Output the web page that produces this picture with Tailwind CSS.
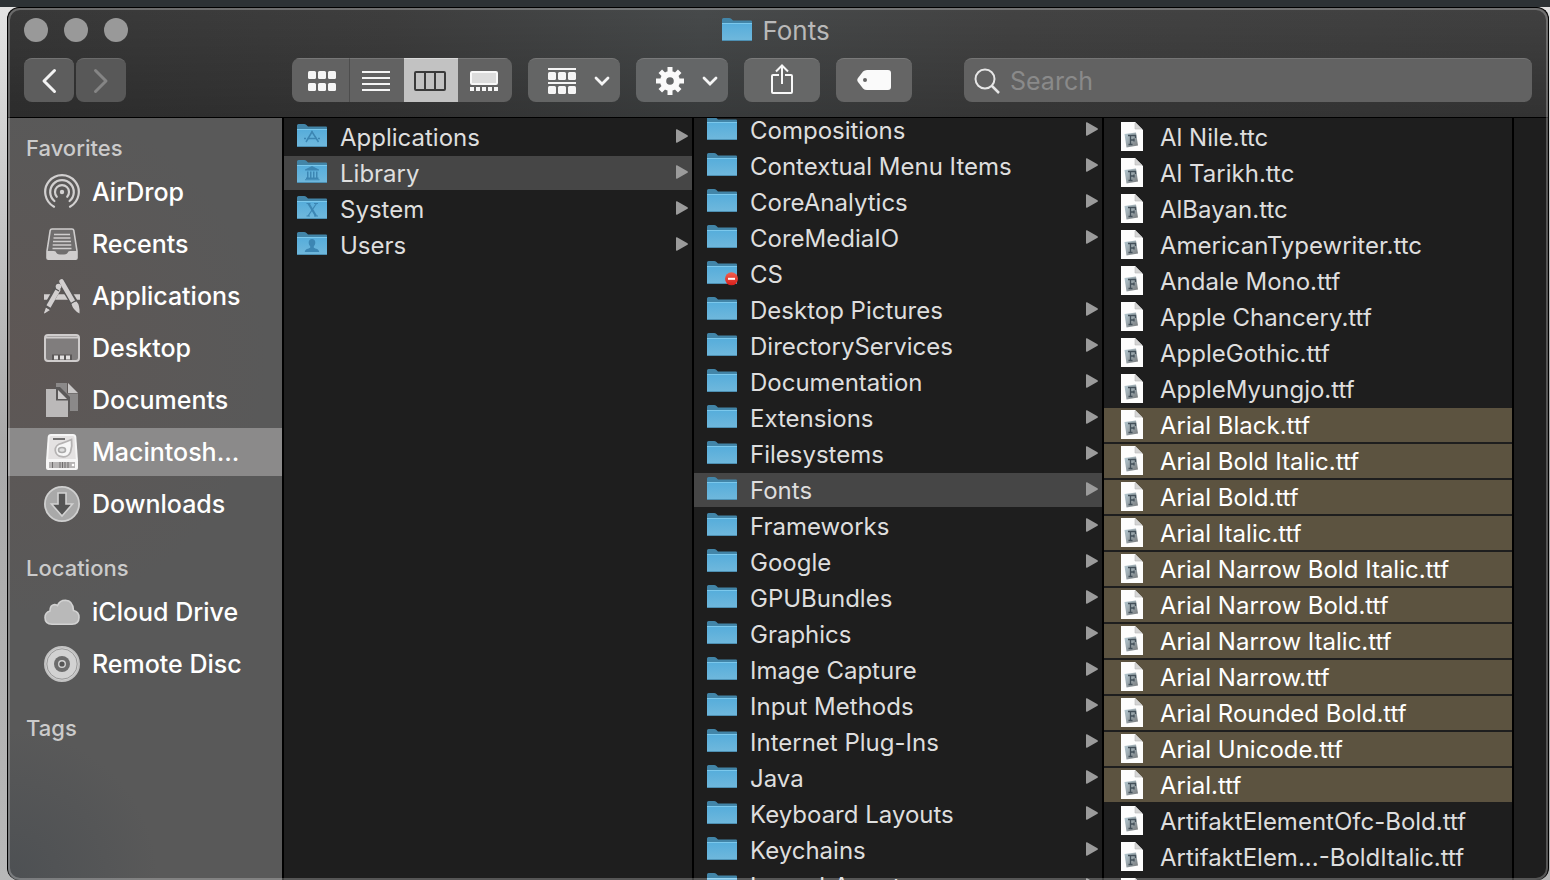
<!DOCTYPE html>
<html lang="en">
<head>
  <meta charset="UTF-8" />
  <meta name="viewport" content="width=device-width, initial-scale=1.0"/>
  <title>Fonts</title>
  <script src="https://cdn.jsdelivr.net/npm/@tailwindcss/browser@4"></script>
</head>
<body class="h-screen overflow-hidden flex flex-col bg-linear-to-b from-[#e4e4e4] via-[#a9a9a9] to-[#b8b8b8] font-[Inter,sans-serif] text-[24px] text-[#dedede]">

  <!-- Shared icons -->
  <svg class="absolute size-0" aria-hidden="true">
    <defs>
      <linearGradient id="folderFill" x1="0" y1="0" x2="0" y2="1">
        <stop offset="0" stop-color="#56addb"/>
        <stop offset="1" stop-color="#70b8dc"/>
      </linearGradient>
      <linearGradient id="fontFill" x1="0" y1="0" x2="1" y2="1">
        <stop offset="0" stop-color="#b8cdd6"/>
        <stop offset="1" stop-color="#77797b"/>
      </linearGradient>
      <linearGradient id="badgeFill" x1="0" y1="0" x2="0" y2="1">
        <stop offset="0" stop-color="#f2604e"/>
        <stop offset="1" stop-color="#d81f1c"/>
      </linearGradient>
      <symbol id="folder" viewBox="0 0 32 26">
        <path d="M0 2.500Q0 1 1.500 1H7Q8.500 1 9.500 2L11 3.500H29Q30 3.500 30 4.500V10H0Z" fill="#4285a8"/>
        <path d="M0 6.500H30V23Q30 24 29 24H1Q0 24 0 23Z" fill="url(#folderFill)"/>
        <path d="M0 6.500H30" stroke="#7bc8ec"/>
        <path d="M0 23.500H30" stroke="#4d8fb2"/>
      </symbol>
      <symbol id="folder-apps" viewBox="0 0 32 26">
        <use href="#folder" width="32" height="26"/>
        <g stroke="#3c86b3" fill="none" stroke-width="1.500"><path d="M15.500 8 9 19M14.500 8 21.500 19"/><path d="M7 15.500H23" stroke-dasharray="2 1.500 9 1.500"/></g>
      </symbol>
      <symbol id="folder-library" viewBox="0 0 32 26">
        <use href="#folder" width="32" height="26"/>
        <g fill="#3c86b3"><path d="M15 7 22 10.500V11.500H8V10.500Z"/><path d="M10 12.500h1.500v6H10zM13 12.500h1.500v6H13zM16 12.500h1.500v6H16zM19 12.500h1.500v6H19zM9 18.500h12.500V20H9zM8 20.300h14.500v1H8z"/></g>
      </symbol>
      <symbol id="folder-system" viewBox="0 0 32 26">
        <use href="#folder" width="32" height="26"/>
        <g stroke="#3c86b3" fill="none"><path d="M11.500 8.500 19 21" stroke-width="2.200"/><path d="M19.500 8.500 11 21" stroke-width="1.200"/><path d="M9.500 8.500h4M17 8.500h4M9.500 21h3.500M17 21h4"/></g>
      </symbol>
      <symbol id="folder-users" viewBox="0 0 32 26">
        <use href="#folder" width="32" height="26"/>
        <path d="M15 8c2 0 3.300 1.300 3.300 3.500 0 1.800-.7 3-1.500 3.800v1.500c1.700 1 5.200 1.200 5.400 4.200H7.800c.2-3 3.700-3.200 5.400-4.200v-1.500c-.8-.8-1.500-2-1.500-3.800C11.700 9.300 13 8 15 8Z" fill="#3c86b3"/>
      </symbol>
      <symbol id="folder-denied" viewBox="0 0 32 26">
        <use href="#folder" width="32" height="26"/>
        <circle cx="24.500" cy="18.800" r="6.500" fill="url(#badgeFill)"/>
        <rect x="21" y="17.800" width="7" height="2" fill="#fff"/>
      </symbol>
      <symbol id="font-file" viewBox="0 0 22 29">
        <path d="M0 0H14L22 8V29H0Z" fill="#fdfdfd"/>
        <path d="M14 0V7H21Z" fill="#d4d4d4"/>
        <path d="M14 1V7H21" fill="none" stroke="#bbb" stroke-width=".6"/>
        <path d="M3.500 12 15 10.500 17 23.500 5.500 25.500Z" fill="url(#fontFill)"/>
        <path d="M7 13.500H14.500V16M9.500 13.500V22.500M7.500 22.500H11.500M9.500 18H13M13 16.500V19.500" fill="none" stroke="#43505a" stroke-width="1.300"/>
      </symbol>
      <symbol id="arrow" viewBox="0 0 12 14">
        <path d="M0 1Q0 0 1 .3L11.500 6.200Q12.300 7 11.500 7.800L1 13.700Q0 14 0 13Z" fill="#9b9b9b"/>
      </symbol>

      <symbol id="airdrop" viewBox="0 0 36 36">
        <g fill="none" stroke="#d2d0d0" stroke-width="2.200" stroke-linecap="round">
          <path d="M10 32.700A16.800 16.800 0 1 1 26 32.700"/>
          <path d="M10.400 27A11.800 11.800 0 1 1 25.600 27"/>
          <path d="M12.800 22.800A7 7 0 1 1 23.200 22.800"/>
        </g>
        <circle cx="18" cy="18" r="2.200" fill="#d2d0d0"/>
      </symbol>
      <symbol id="recents" viewBox="0 0 36 36">
        <path d="M8 3H28Q29.500 3 29.800 4.500L33 25V32Q33 33.300 31.700 33.300H4.300Q3 33.300 3 32V25L6.200 4.500Q6.500 3 8 3Z" fill="#706e6e" stroke="#cfcdcd" stroke-width="1.600"/>
        <path d="M3 25H10Q12 25 12.500 27 13.500 28.500 18 28.500T23.500 27Q24 25 26 25H33V32Q33 33.300 31.700 33.300H4.300Q3 33.300 3 32Z" fill="#cfcdcd"/>
        <path d="M10 8.500H26M9.500 12H26.500M9 15.500H27M8.700 19H27.300M8.500 22.500H27.500" stroke="#cfcdcd" stroke-width="1.600"/>
      </symbol>
      <symbol id="apps" viewBox="0 0 36 36">
        <g fill="none" stroke="#d2cfcf">
          <path d="M0 19H36" stroke-width="5.500"/>
          <path d="M17 3 31 26" stroke="#585656" stroke-width="8"/>
          <path d="M16 6 3 29" stroke="#585656" stroke-width="7"/>
          <path d="M14.800 10.500 4.500 28.500" stroke-width="4.600"/>
          <path d="M17.500 3.500 29.300 24" stroke-width="4.600" stroke-linecap="round"/>
        </g>
        <circle cx="14.500" cy="8.500" r="2.800" fill="#d2cfcf"/>
        <path d="M2 29.500 6 32 .5 35.500 0 35ZM27.500 26 32.500 23.500Q36 27 35.500 35.500 29 32 27.500 26Z" fill="#d2cfcf"/>
        <path d="M10 10 15 13M1.500 28.500 6.500 31.500M26 26 32 22.500" stroke="#585656" stroke-width="1.200"/>
      </symbol>
      <symbol id="desktop" viewBox="0 0 36 36">
        <rect x="1" y="5" width="34" height="26" rx="3" fill="#807d7d" stroke="#cfcccc" stroke-width="2"/>
        <path d="M2 7.500H34" stroke="#cfcccc" stroke-width="2"/>
        <path d="M8 24.500H28V30H8Z" fill="#5a5757"/>
        <path d="M10 25.500h4v4h-4zM16 25.500h4v4h-4zM22 25.500h4v4h-4z" fill="#e2e0e0"/>
      </symbol>
      <symbol id="documents" viewBox="0 0 36 36">
        <path d="M12 1H23V11.500H34V29H12Z" fill="#8b8989"/>
        <path d="M24 1 34 11H24Z" fill="#c9c7c7"/>
        <path d="M11 5H16L26 15V30H11Z" fill="#5b5959"/>
        <path d="M2 7H12V18.500H24V35H2Z" fill="#bbb9b9"/>
        <path d="M14 8 23 17H14Z" fill="#cfcdcd"/>
      </symbol>
      <symbol id="drive" viewBox="0 0 36 36">
        <path d="M7 0H29Q32 0 32.300 3L34 27V34Q34 36 32 36H4Q2 36 2 34V27L3.700 3Q4 0 7 0Z" fill="#f6f6f6"/>
        <path d="M7 2H29Q30.300 2 30.500 4L31.800 25H4.200L5.500 4Q5.700 2 7 2Z" fill="#e4e2e2"/>
        <path d="M9 5H21" stroke="#555" stroke-width="1.600"/>
        <path d="M27.500 5.500Q22 8 17.500 9.300A7.800 6.800 0 1 0 26.500 18Q28.500 12 27.500 5.500Z" fill="#f6f6f6" stroke="#b5b3b3" stroke-width="1.800"/>
        <ellipse cx="18" cy="16" rx="3.500" ry="2.500" fill="#ddd" stroke="#aaa" stroke-width="1.600"/>
        <path d="M5 28H31V34H5Z" fill="#b6b4b4"/>
        <path d="M8.500 28V34M16 28V34M18.500 28V34M21 28V34M24 28V34" stroke="#706e6e"/>
        <circle cx="29" cy="31" r="1.300" fill="#fff"/>
      </symbol>
      <symbol id="downloads" viewBox="0 0 36 36">
        <circle cx="18" cy="18" r="17.100" fill="#a9a9a9" stroke="#cfcfcf" stroke-width="1.800"/>
        <path d="M14 7H22V18H28.500L18 30 7.500 18H14Z" fill="#555" stroke="#d2d2d2" stroke-width="1.600"/>
      </symbol>
      <symbol id="cloud" viewBox="0 0 36 36">
        <path d="M8 30.300Q1 30 1 23.500 1 18.500 6 17 6 11 10.500 10.500 12 10.500 13.500 11.500 15.500 6.200 21.500 6.200 29 6.500 29.500 16.500 35 17.500 35 23.500 35 30 28 30.300Z" fill="#b9b9b9" stroke="#d2d2d2" stroke-width="1.600"/>
      </symbol>
      <symbol id="disc" viewBox="0 0 36 36">
        <circle cx="18" cy="18" r="17.100" fill="#d2d2d2" stroke="#c2c2c2" stroke-width="1.800"/>
        <circle cx="18" cy="18" r="15.200" fill="none" stroke="#999"/>
        <circle cx="18" cy="18" r="8" fill="#6c6c6c"/>
        <circle cx="18" cy="18" r="3.300" fill="#555" stroke="#d2d2d2" stroke-width="1.400"/>
      </symbol>
    </defs>
  </svg>

  <!-- Strip above the window -->
  <div class="h-[7px] shrink-0 bg-[#2d3235]"></div>

  <!-- Window -->
  <div class="relative flex-1 min-h-0 ml-[7px] mr-px flex flex-col rounded-xl border-x border-t border-black bg-[#1e1e1e] overflow-hidden">

    <!-- Title bar and toolbar -->
    <header class="shrink-0 border-b border-black bg-[linear-gradient(to_bottom,transparent,rgba(0,0,0,0.22)),linear-gradient(to_right,#383838,#3e3e3e_25%,#474a4b_45%,#434343_65%,#404040)]">
      <div class="h-11 pl-4 pr-5 grid grid-cols-[1fr_auto_1fr] items-center">
        <div class="flex gap-4">
          <button aria-label="Close" class="size-6 rounded-full bg-[#999]"></button>
          <button aria-label="Minimize" class="size-6 rounded-full bg-[#999]"></button>
          <button aria-label="Zoom" class="size-6 rounded-full bg-[#999]"></button>
        </div>
        <h1 class="flex items-center gap-2 text-[26px] leading-8 text-[#b9b9b9]">
          <svg class="w-8 h-[26px]"><use href="#folder"/></svg><span class="pt-0.5">Fonts</span>
        </h1>
      </div>

      <div class="flex items-center pt-1.5 pb-[15px] px-4">
        <div class="flex gap-0.5">
          <button aria-label="Back" class="w-[50px] h-11 rounded-lg bg-[#5d5d5d] border-t border-[#737373] flex items-center justify-center">
            <svg width="16" height="26" viewBox="0 0 16 26" fill="none" stroke="#f2f2f2" stroke-width="3" stroke-linecap="round" stroke-linejoin="round"><path d="M13.500 2.500 3 13 13.500 23.500"/></svg>
          </button>
          <button aria-label="Forward" disabled class="w-[50px] h-11 rounded-lg bg-[#585858] border-t border-[#6b6b6b] flex items-center justify-center">
            <svg width="16" height="26" viewBox="0 0 16 26" fill="none" stroke="#858585" stroke-width="3" stroke-linecap="round" stroke-linejoin="round"><path d="M2.500 2.500 13 13 2.500 23.500"/></svg>
          </button>
        </div>

        <!-- View switcher -->
        <div class="ml-[166px] flex h-11 rounded-lg overflow-hidden bg-[#626262]">
          <button aria-label="Icon view" class="w-[58px] pl-0.5 border-t border-r border-t-[#777] border-r-[#4d4d4d] flex items-center justify-center">
            <svg width="28" height="20" fill="#f5f5f5"><rect width="8" height="8" rx="1.500"/><rect x="10" width="8" height="8" rx="1.500"/><rect x="20" width="8" height="8" rx="1.500"/><rect y="12" width="8" height="8" rx="1.500"/><rect x="10" y="12" width="8" height="8" rx="1.500"/><rect x="20" y="12" width="8" height="8" rx="1.500"/></svg>
          </button>
          <button aria-label="List view" class="w-[54px] pr-0.5 border-t border-[#777] flex items-center justify-center">
            <svg width="28" height="20" fill="#f5f5f5"><path d="M0 0h28v2H0zM0 6h28v2H0zM0 12h28v2H0zM0 18h28v2H0z"/></svg>
          </button>
          <button aria-label="Column view" aria-pressed="true" class="w-[54px] pr-0.5 bg-[#c2c2c2] border-t border-[#dadada] flex items-center justify-center">
            <svg width="32" height="20" fill="none" stroke="#3a3a3a" stroke-width="2"><rect x="1" y="1" width="30" height="18" rx="1"/><path d="M11 1v18M21 1v18"/></svg>
          </button>
          <button aria-label="Gallery view" class="w-[54px] pr-0.5 border-t border-[#777] flex items-center justify-center">
            <svg width="28" height="20"><rect x="1" y="1" width="26" height="12" rx="1" fill="#dcdcdc" stroke="#f8f8f8" stroke-width="2"/><path d="M0 16h4v4H0zM6 16h4v4H6zM12 16h4v4h-4zM18 16h4v4h-4zM24 16h4v4h-4z" fill="#f5f5f5"/></svg>
          </button>
        </div>

        <button aria-label="Group" class="ml-4 w-[92px] h-11 pl-5 pr-2.5 rounded-lg bg-[#646565] border-t border-[#777] flex items-center justify-between">
          <svg width="28" height="26" fill="#f5f5f5"><path d="M0 0h28v2H0zM0 14h28v2H0z"/><rect y="4" width="8" height="8" rx="1.500"/><rect x="10" y="4" width="8" height="8" rx="1.500"/><rect x="20" y="4" width="8" height="8" rx="1.500"/><rect y="18" width="8" height="8" rx="1.500"/><rect x="10" y="18" width="8" height="8" rx="1.500"/><rect x="20" y="18" width="8" height="8" rx="1.500"/></svg>
          <svg width="16" height="10" fill="none" stroke="#f5f5f5" stroke-width="2.800" stroke-linecap="round"><path d="M2 2 8 8 14 2"/></svg>
        </button>
        <button aria-label="Action" class="ml-4 w-[92px] h-11 pl-5 pr-2.5 rounded-lg bg-[#646667] border-t border-[#797a7b] flex items-center justify-between">
          <svg width="28" height="28" viewBox="-14 -14 28 28">
            <g stroke="#fafafa" stroke-width="5"><path d="M0-14V14M-14 0H14M-9.700-9.700 9.700 9.700M9.700-9.700-9.700 9.700"/></g>
            <circle r="10" fill="#fafafa"/><circle r="3.800" fill="#646667"/>
          </svg>
          <svg width="16" height="10" fill="none" stroke="#f5f5f5" stroke-width="2.800" stroke-linecap="round"><path d="M2 2 8 8 14 2"/></svg>
        </button>
        <button aria-label="Share" class="ml-4 w-[76px] h-11 pb-1 rounded-lg bg-[#666767] border-t border-[#7b7b7b] flex items-center justify-center">
          <svg width="24" height="32" fill="none" stroke="#f8f8f8" stroke-width="2"><path d="M9 12H3Q2 12 2 13V29Q2 30 3 30H21Q22 30 22 29V13Q22 12 21 12H15M12 21V3M6 8.500 12 2.500 18 8.500"/></svg>
        </button>
        <button aria-label="Edit tags" class="ml-4 w-[76px] h-11 pb-0.5 rounded-lg bg-[#656565] border-t border-[#7a7a7a] flex items-center justify-center">
          <svg width="34" height="20"><path d="M10 0H31Q34 0 34 3V17Q34 20 31 20H10Q7.500 20 6 18.500L1 12Q-.5 10 1 8L6 1.500Q7.500 0 10 0Z" fill="#fafafa"/><circle cx="8" cy="10" r="2" fill="#656565"/></svg>
        </button>

        <label class="ml-[52px] flex-1 h-11 px-2.5 rounded-lg bg-[#626262] border-t border-[#757575] flex items-center gap-2.5">
          <svg width="26" height="26" class="shrink-0" fill="none" stroke="#e6e6e6" stroke-width="2"><circle cx="11" cy="11" r="9.500"/><path d="M18 18 25 25" stroke-width="2.500"/></svg>
          <input type="text" aria-label="Search" placeholder="Search" class="flex-1 min-w-0 pt-0.5 bg-transparent outline-none text-[25px] placeholder:text-[#8a8a8a]">
        </label>
      </div>
    </header>

    <main class="flex-1 min-h-0 flex">
      <!-- Sidebar -->
      <nav class="w-[276px] shrink-0 pt-3 border-r-2 border-black font-medium text-[25px] text-white overflow-hidden bg-[radial-gradient(circle_at_bottom_left,#4d5053,transparent_150px),radial-gradient(circle_at_0_240px,#5e5755,transparent_260px)] bg-[#595959]">
        <h2 class="h-9 mb-0.5 pl-[18px] text-[22px] leading-9 text-[#cbcbcb]">Favorites</h2>
        <ul id="favorites" class="flex flex-col gap-1"></ul>
        <h2 class="h-9 mt-[22px] mb-0.5 pl-[18px] text-[22px] leading-9 text-[#cbcbcb]">Locations</h2>
        <ul id="locations" class="flex flex-col gap-1"></ul>
        <h2 class="h-9 mt-[22px] pl-[18px] text-[22px] leading-9 text-[#cbcbcb]">Tags</h2>
      </nav>

      <!-- Columns -->
      <div class="w-[410px] shrink-0 border-r-2 border-black overflow-hidden">
        <ul id="root" class="pt-0.5 flex flex-col gap-0.5"></ul>
      </div>
      <div class="w-[410px] shrink-0 border-r-2 border-black overflow-hidden">
        <ul id="library" class="-mt-[5px] flex flex-col gap-0.5"></ul>
      </div>
      <div class="w-[410px] shrink-0 border-r-2 border-black overflow-hidden">
        <ul id="fonts" class="pt-0.5 flex flex-col gap-0.5"></ul>
      </div>
    </main>

    <!-- Light edge of the window -->
    <div class="absolute inset-0 rounded-xl border-2 border-white/25 pointer-events-none"></div>
  </div>

  <script>
    const favorites = [['AirDrop', 'airdrop'], ['Recents', 'recents'], ['Applications', 'apps'], ['Desktop', 'desktop'], ['Documents', 'documents'], ['Macintosh...', 'drive'], ['Downloads', 'downloads']];
    const locations = [['iCloud Drive', 'cloud'], ['Remote Disc', 'disc']];
    const root = [['Applications', 'folder-apps'], ['Library', 'folder-library'], ['System', 'folder-system'], ['Users', 'folder-users']];
    const library = ['Compositions', 'Contextual Menu Items', 'CoreAnalytics', 'CoreMediaIO', 'CS', 'Desktop Pictures', 'DirectoryServices', 'Documentation', 'Extensions', 'Filesystems', 'Fonts', 'Frameworks', 'Google', 'GPUBundles', 'Graphics', 'Image Capture', 'Input Methods', 'Internet Plug-Ins', 'Java', 'Keyboard Layouts', 'Keychains', 'LaunchAgents'];
    const fonts = ['Al Nile.ttc', 'Al Tarikh.ttc', 'AlBayan.ttc', 'AmericanTypewriter.ttc', 'Andale Mono.ttf', 'Apple Chancery.ttf', 'AppleGothic.ttf', 'AppleMyungjo.ttf', 'Arial Black.ttf', 'Arial Bold Italic.ttf', 'Arial Bold.ttf', 'Arial Italic.ttf', 'Arial Narrow Bold Italic.ttf', 'Arial Narrow Bold.ttf', 'Arial Narrow Italic.ttf', 'Arial Narrow.ttf', 'Arial Rounded Bold.ttf', 'Arial Unicode.ttf', 'Arial.ttf', 'ArtifaktElementOfc-Bold.ttf', 'ArtifaktElem...-BoldItalic.ttf', 'ArtifaktElementOfc-Book.ttf'];

    function sidebarRow([name, icon]) {
      const bg = name === 'Macintosh...' ? 'bg-[#8b8a8a]' : '';
      return `<li><a href="#" class="h-12 pl-9 flex items-center gap-3 ${bg}"><svg class="size-9 shrink-0"><use href="#${icon}"/></svg><span class="pt-0.5">${name}</span></a></li>`;
    }

    function folderRow(name, icon, selected) {
      const bg = selected ? 'bg-[#464646]' : '';
      const arrow = icon === 'folder-denied' ? '' : '<svg class="w-3 h-3.5 mb-0.5"><use href="#arrow"/></svg>';
      return `<li><a href="#" class="h-[34px] pl-[13px] pr-1 flex items-center gap-[11px] ${bg}"><svg class="w-8 h-[26px] mb-0.5 shrink-0"><use href="#${icon}"/></svg><span class="flex-1 pt-0.5">${name}</span>${arrow}</a></li>`;
    }

    function fontRow(name) {
      const color = name.startsWith('Arial') ? 'bg-[#5c5340] text-white' : '';
      return `<li><a href="#" class="h-[34px] pl-[17px] flex items-center gap-[17px] whitespace-nowrap ${color}"><svg class="w-[22px] h-[29px] mb-0.5 shrink-0"><use href="#font-file"/></svg><span class="pt-0.5">${name}</span></a></li>`;
    }

    document.getElementById('favorites').innerHTML = favorites.map(sidebarRow).join('');
    document.getElementById('locations').innerHTML = locations.map(sidebarRow).join('');
    document.getElementById('root').innerHTML = root.map(([name, icon]) => folderRow(name, icon, name === 'Library')).join('');
    document.getElementById('library').innerHTML = library.map(name => folderRow(name, name === 'CS' ? 'folder-denied' : 'folder', name === 'Fonts')).join('');
    document.getElementById('fonts').innerHTML = fonts.map(fontRow).join('');
  </script>
</body>
</html>
